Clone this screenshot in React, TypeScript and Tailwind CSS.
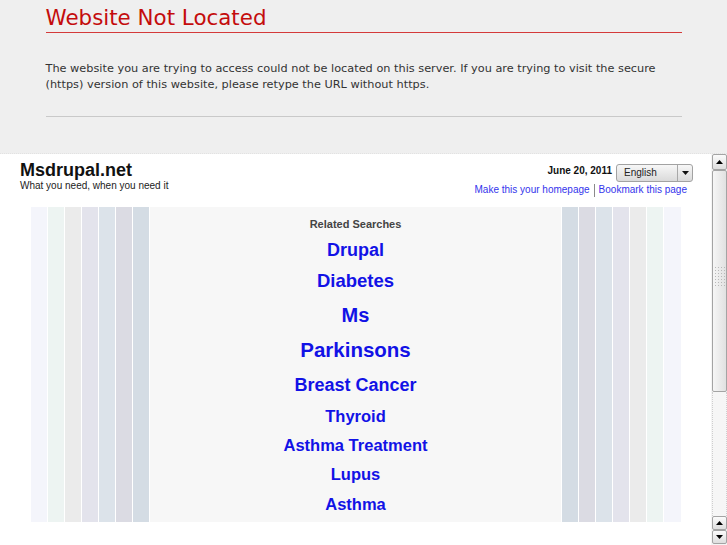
import React from "react";

const leftStripes = [
  "bg-[#f4f5fb]",
  "bg-[#edf4f2]",
  "bg-[#ebebeb]",
  "bg-[#e3e3ec]",
  "bg-[#dce3ea]",
  "bg-[#dbdbe3]",
  "bg-[#d4dce4]",
];
const rightStripes = [
  "w-[16px] bg-[#d4dce4]",
  "w-[16px] bg-[#dbdbe3]",
  "w-[16px] bg-[#dce3ea]",
  "w-[16px] bg-[#e3e3ec]",
  "w-[16px] bg-[#ebebeb]",
  "w-[16px] bg-[#edf4f2]",
  "w-[17px] bg-[#f4f5fb]",
];

const links = [
  { t: "Drupal", c: "text-[18px] mt-[7px]" },
  { t: "Diabetes", c: "text-[18.5px] mt-[7px]" },
  { t: "Ms", c: "text-[20px] mt-[10px]" },
  { t: "Parkinsons", c: "text-[20.5px] mt-[11px]" },
  { t: "Breast Cancer", c: "text-[18px] mt-[11px]" },
  { t: "Thyroid", c: "text-[16.5px] mt-[7px]" },
  { t: "Asthma Treatment", c: "text-[16.5px] mt-[5px]" },
  { t: "Lupus", c: "text-[16.5px] mt-[5px]" },
  { t: "Asthma", c: "text-[16.5px] mt-[6px]" },
];

function Tri({ up }: { up?: boolean }) {
  return (
    <svg width="7" height="4" viewBox="0 0 7 4">
      {up ? <polygon points="0,4 7,4 3.5,0" fill="#000" /> : <polygon points="0,0 7,0 3.5,4" fill="#000" />}
    </svg>
  );
}

function ScrollButton({ up, h }: { up?: boolean; h: string }) {
  return (
    <div className={`${h} w-full border border-[#a4a4a4] rounded-[2px] bg-gradient-to-b from-[#fbfbfb] to-[#dedede] flex items-center justify-center`}>
      <Tri up={up} />
    </div>
  );
}

function Scrollbar() {
  return (
    <div className="w-[16px] h-full flex flex-col bg-[#f5f5f5] pl-px">
      <ScrollButton up h="h-[16px]" />
      <div className="h-[222px] w-full border border-[#a4a4a4] rounded-[2px] bg-gradient-to-r from-[#f6f6f6] to-[#e1e1e1] flex items-center justify-center">
        <div className="grid grid-cols-4 gap-[2px] mt-[-10px]">
          {Array.from({ length: 28 }).map((_, i) => (
            <div key={i} className="w-px h-px bg-[#b8b8b8]" />
          ))}
        </div>
      </div>
      <div className="flex-1 w-full border-x border-dotted border-[#cfcfcf] bg-[#f6f6f6]" />
      <ScrollButton up h="h-[14px]" />
      <ScrollButton h="h-[14px]" />
      <div className="h-px" />
    </div>
  );
}

export default function App() {
  return (
    <div className="w-[727px] h-[545px] overflow-hidden bg-white flex flex-col">
      {/* Top error area */}
      <div className="h-[154px] shrink-0 bg-[#efefef] border-b border-dotted border-[#e2e2e2] font-['DejaVu_Sans',sans-serif]">
        <div className="w-[636px] mx-auto pt-[5px]">
          <h1 className="text-[21.4px] leading-[26px] text-[#c40c0c] border-b border-[#d43a3a] pb-px">
            Website Not Located
          </h1>
          <p className="mt-[28px] text-[11.3px] leading-[16px] text-[#333]">
            The website you are trying to access could not be located on this server. If you are trying to visit the secure (https) version of this website, please retype the URL without https.
          </p>
          <div className="mt-[23px] border-t border-[#c9c9c9]" />
        </div>
      </div>

      {/* Frame area */}
      <div className="flex-1 flex min-h-0">
        <div className="flex-1 bg-white font-['Liberation_Sans',Arial,sans-serif]">
          <div className="flex justify-between pl-[20px] pr-[18px]">
            <div className="pt-[6px]">
              <div className="text-[18px] leading-[20px] font-bold text-[#111]">Msdrupal.net</div>
              <div className="text-[10px] leading-[12px] text-[#222]">What you need, when you need it</div>
            </div>
            <div className="pt-[10px] flex flex-col items-end">
              <div className="flex items-start">
                <span className="mt-px text-[10px] leading-[12px] font-bold text-[#111]">June 20, 2011</span>
                <div className="ml-[4px] w-[77px] h-[18px] border border-[#a2a2a2] rounded-[3px] bg-gradient-to-b from-[#f7f7f7] to-[#dadada] flex items-stretch">
                  <span className="flex-1 pl-[7px] text-[10px] leading-[16px] text-[#222]">English</span>
                  <span className="w-[15px] border-l border-[#a8a8a8] flex items-center justify-center">
                    <svg width="7" height="4" viewBox="0 0 7 4">
                      <polygon points="0,0 7,0 3.5,4" fill="#111" />
                    </svg>
                  </span>
                </div>
              </div>
              <div className="flex items-center mt-px pr-[6px] text-[10px] leading-[14px] text-[#3434ec]">
                <span>Make this your homepage</span>
                <span className="mx-[4px] w-px h-[13px] bg-[#8a8a8a]" />
                <span>Bookmark this page</span>
              </div>
            </div>
          </div>

          <div className="mt-[10px] ml-[31px] w-[650px] h-[315px] flex bg-white gap-px">
            {leftStripes.map((c, i) => (
              <div key={"l" + i} className={`w-[16px] ${c}`} />
            ))}
            <div className="w-[411px] bg-[#f7f7f7] flex flex-col items-center pt-[10px] font-bold">
              <div className="text-[11px] leading-[14px] text-[#444]">Related Searches</div>
              {links.map((l) => (
                <a key={l.t} className={`${l.c} leading-[24px] text-[#1212e6]`}>
                  {l.t}
                </a>
              ))}
            </div>
            {rightStripes.map((c, i) => (
              <div key={"r" + i} className={c} />
            ))}
          </div>
        </div>
        <Scrollbar />
      </div>
    </div>
  );
}
